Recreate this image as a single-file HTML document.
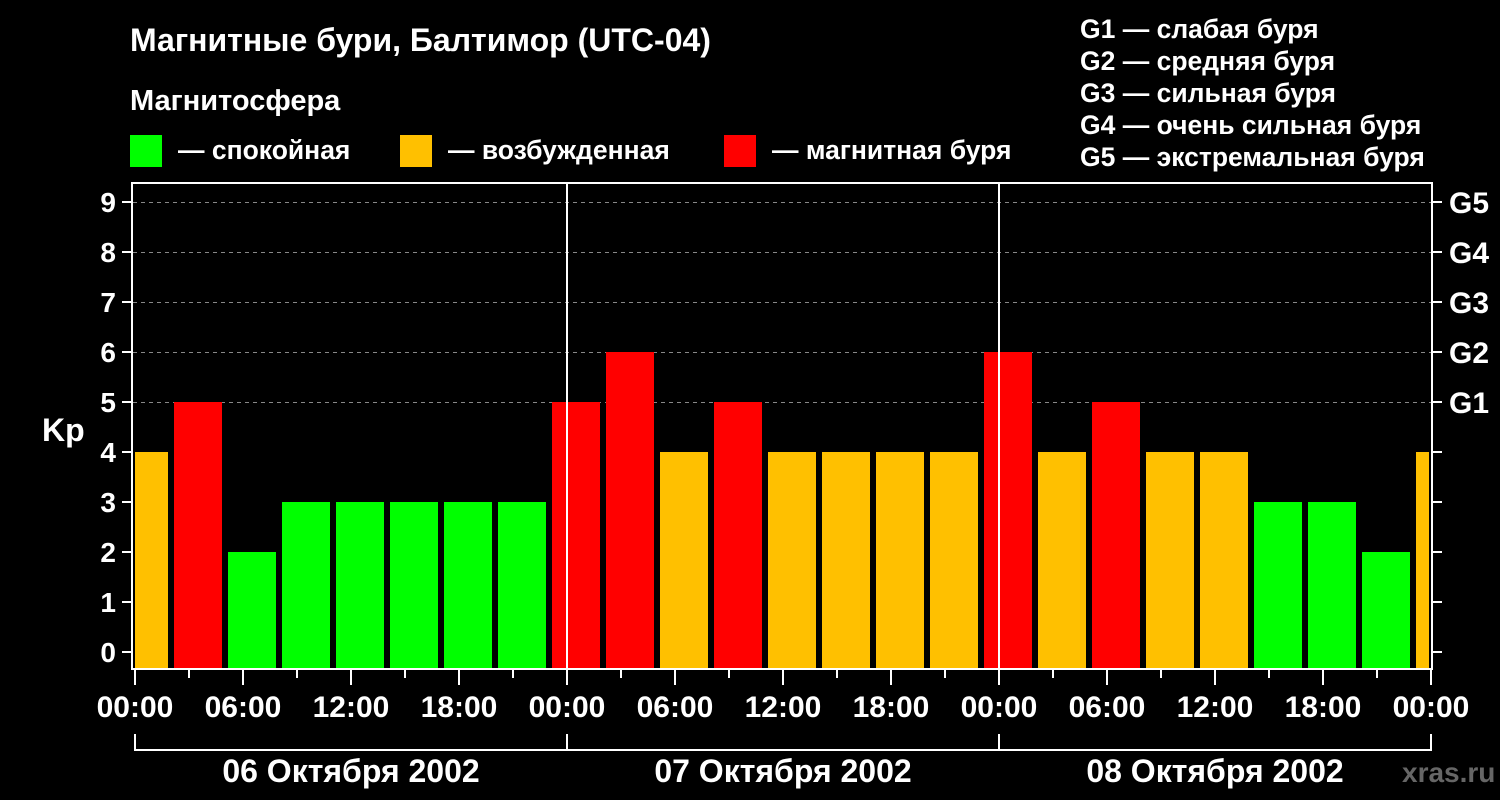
<!DOCTYPE html>
<html><head><meta charset="utf-8"><style>
html,body{margin:0;padding:0;background:#000;}
svg{display:block;font-family:"Liberation Sans",Arial,sans-serif;font-weight:bold;}
</style></head><body>
<svg width="1500" height="800" viewBox="0 0 1500 800" xmlns="http://www.w3.org/2000/svg">
<rect width="1500" height="800" fill="#000"/>
<g fill="#fff">
<text x="130" y="51" font-size="32">Магнитные бури, Балтимор (UTC-04)</text>
<text x="130" y="110" font-size="29">Магнитосфера</text>
<text x="178" y="159" font-size="26.5">— спокойная</text>
<text x="448" y="159" font-size="26.5">— возбужденная</text>
<text x="772" y="159" font-size="26.5">— магнитная буря</text>
<text x="1080" y="38" font-size="26.5">G1 — слабая буря</text>
<text x="1080" y="70" font-size="26.5">G2 — средняя буря</text>
<text x="1080" y="102" font-size="26.5">G3 — сильная буря</text>
<text x="1080" y="134" font-size="26.5">G4 — очень сильная буря</text>
<text x="1080" y="166" font-size="26.5">G5 — экстремальная буря</text>
</g>
<rect x="130" y="135" width="32" height="32" fill="#00ff00"/>
<rect x="400" y="135" width="32" height="32" fill="#ffc000"/>
<rect x="724" y="135" width="32" height="32" fill="#ff0000"/>

<g stroke="#888" stroke-width="1" stroke-dasharray="4,4">
<line x1="133" y1="202.5" x2="1432" y2="202.5"/>
<line x1="133" y1="252.5" x2="1432" y2="252.5"/>
<line x1="133" y1="302.5" x2="1432" y2="302.5"/>
<line x1="133" y1="352.5" x2="1432" y2="352.5"/>
<line x1="133" y1="402.5" x2="1432" y2="402.5"/>
</g>
<defs><clipPath id="c"><rect x="135" y="183" width="1294" height="486"/></clipPath></defs>
<g clip-path="url(#c)">
<rect x="120" y="452" width="48" height="216" fill="#ffc000"/>
<rect x="174" y="402" width="48" height="266" fill="#ff0000"/>
<rect x="228" y="552" width="48" height="116" fill="#00ff00"/>
<rect x="282" y="502" width="48" height="166" fill="#00ff00"/>
<rect x="336" y="502" width="48" height="166" fill="#00ff00"/>
<rect x="390" y="502" width="48" height="166" fill="#00ff00"/>
<rect x="444" y="502" width="48" height="166" fill="#00ff00"/>
<rect x="498" y="502" width="48" height="166" fill="#00ff00"/>
<rect x="552" y="402" width="48" height="266" fill="#ff0000"/>
<rect x="606" y="352" width="48" height="316" fill="#ff0000"/>
<rect x="660" y="452" width="48" height="216" fill="#ffc000"/>
<rect x="714" y="402" width="48" height="266" fill="#ff0000"/>
<rect x="768" y="452" width="48" height="216" fill="#ffc000"/>
<rect x="822" y="452" width="48" height="216" fill="#ffc000"/>
<rect x="876" y="452" width="48" height="216" fill="#ffc000"/>
<rect x="930" y="452" width="48" height="216" fill="#ffc000"/>
<rect x="984" y="352" width="48" height="316" fill="#ff0000"/>
<rect x="1038" y="452" width="48" height="216" fill="#ffc000"/>
<rect x="1092" y="402" width="48" height="266" fill="#ff0000"/>
<rect x="1146" y="452" width="48" height="216" fill="#ffc000"/>
<rect x="1200" y="452" width="48" height="216" fill="#ffc000"/>
<rect x="1254" y="502" width="48" height="166" fill="#00ff00"/>
<rect x="1308" y="502" width="48" height="166" fill="#00ff00"/>
<rect x="1362" y="552" width="48" height="116" fill="#00ff00"/>
<rect x="1416" y="452" width="48" height="216" fill="#ffc000"/>
</g>
<g stroke="#fff" stroke-width="2" fill="none">
<path d="M132 183 H1432 V669 H132 Z"/>
<line x1="567" y1="183" x2="567" y2="668"/>
<line x1="999" y1="183" x2="999" y2="668"/>
<path d="M122 202H132M122 252H132M122 302H132M122 352H132M122 402H132M122 452H132M122 502H132M122 552H132M122 602H132M122 652H132"/>
<path d="M1432 202H1442M1432 252H1442M1432 302H1442M1432 352H1442M1432 402H1442M1432 452H1442M1432 502H1442M1432 552H1442M1432 602H1442M1432 652H1442"/>
<path d="M135 670V685M243 670V685M351 670V685M459 670V685M567 670V685M675 670V685M783 670V685M891 670V685M999 670V685M1107 670V685M1215 670V685M1323 670V685M1431 670V685"/>
<path d="M189 670V678M297 670V678M405 670V678M513 670V678M621 670V678M729 670V678M837 670V678M945 670V678M1053 670V678M1161 670V678M1269 670V678M1377 670V678"/>
<path d="M135 734V750H1431V734M567 734V750M999 734V750"/>
</g>
<g fill="#fff" font-size="28" text-anchor="end">
<text x="116" y="212">9</text><text x="116" y="262">8</text><text x="116" y="312">7</text>
<text x="116" y="362">6</text><text x="116" y="412">5</text><text x="116" y="462">4</text>
<text x="116" y="512">3</text><text x="116" y="562">2</text><text x="116" y="612">1</text>
<text x="116" y="662">0</text>
</g>
<text x="42" y="441" fill="#fff" font-size="32">Kp</text>
<g fill="#fff" font-size="30">
<text x="1449" y="213">G5</text><text x="1449" y="263">G4</text><text x="1449" y="313">G3</text>
<text x="1449" y="363">G2</text><text x="1449" y="413">G1</text>
</g>
<g fill="#fff" font-size="30" text-anchor="middle">
<text x="135" y="717">00:00</text><text x="243" y="717">06:00</text><text x="351" y="717">12:00</text>
<text x="459" y="717">18:00</text><text x="567" y="717">00:00</text><text x="675" y="717">06:00</text>
<text x="783" y="717">12:00</text><text x="891" y="717">18:00</text><text x="999" y="717">00:00</text>
<text x="1107" y="717">06:00</text><text x="1215" y="717">12:00</text><text x="1323" y="717">18:00</text>
<text x="1431" y="717">00:00</text>
</g>
<g fill="#fff" font-size="32" text-anchor="middle">
<text x="351" y="782">06 Октября 2002</text>
<text x="783" y="782">07 Октября 2002</text>
<text x="1215" y="782">08 Октября 2002</text>
</g>
<text x="1402" y="782" fill="#666" font-size="28">xras.ru</text>
</svg>
</body></html>
